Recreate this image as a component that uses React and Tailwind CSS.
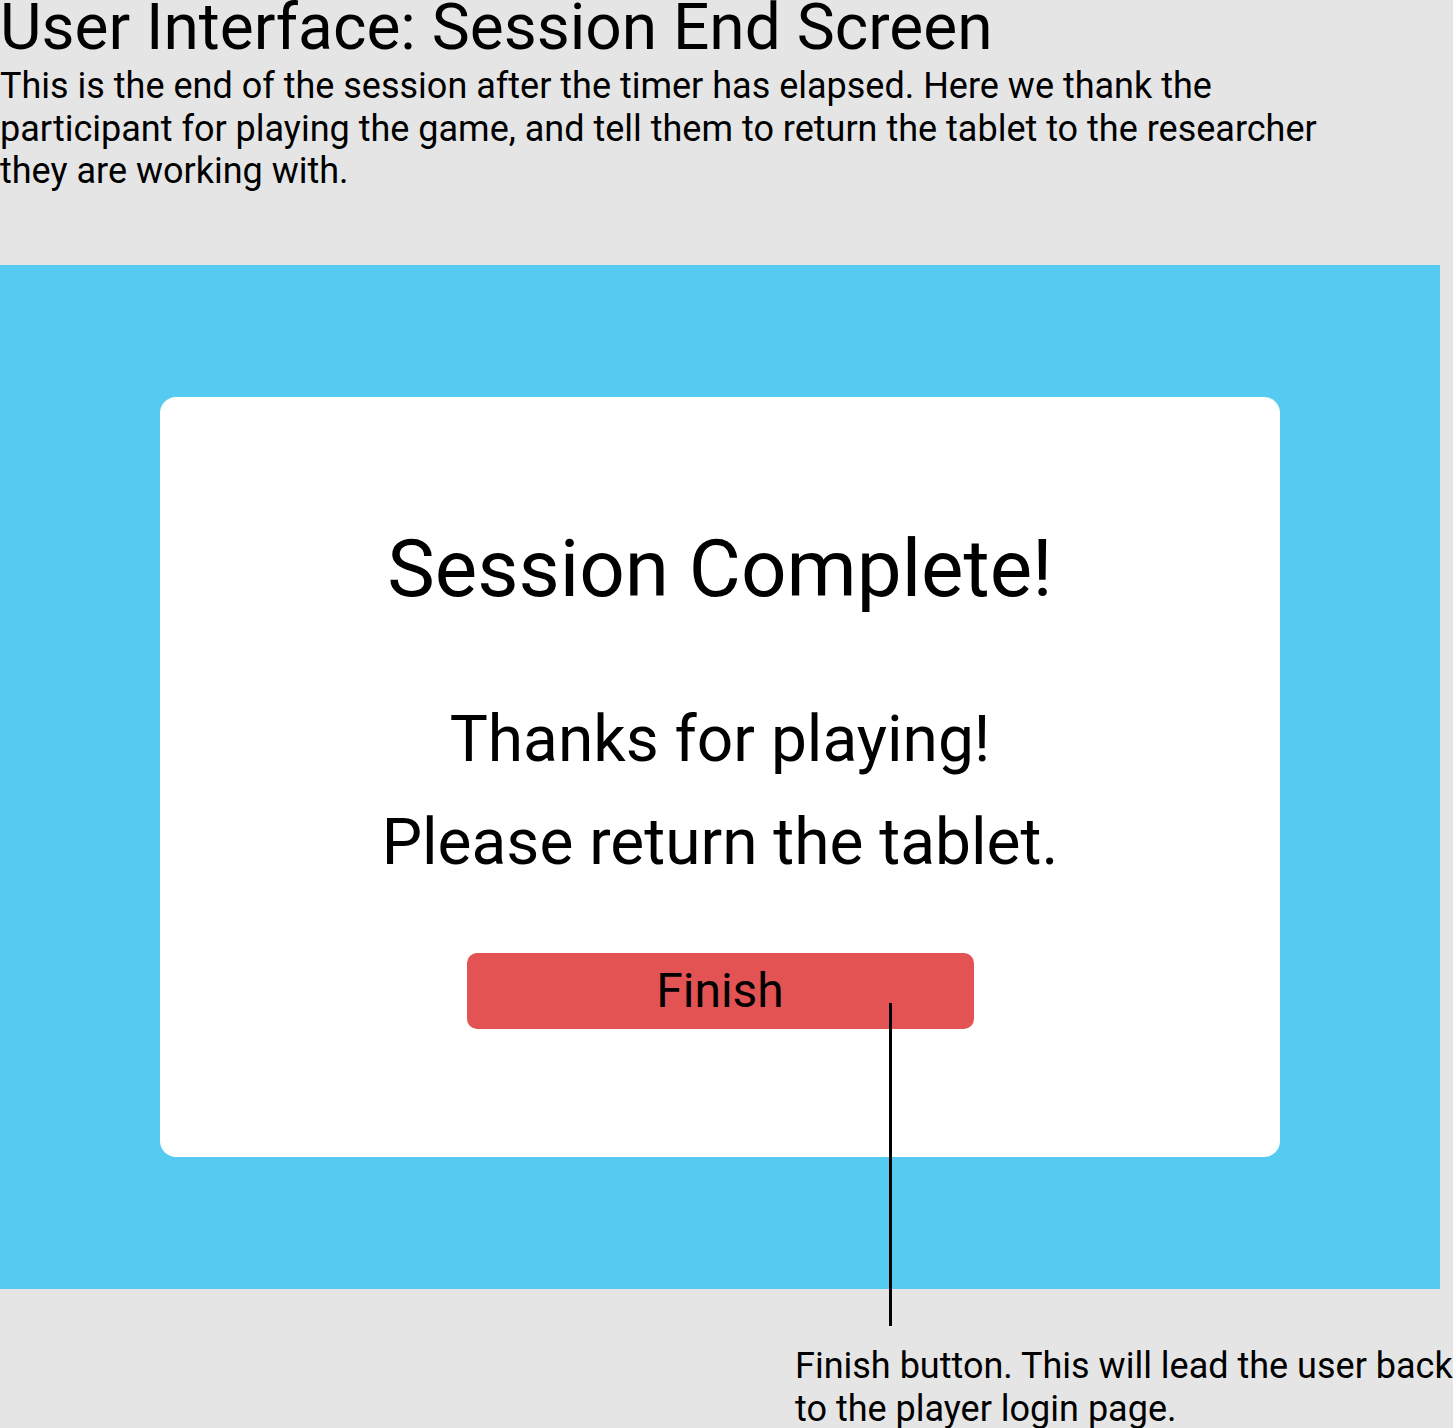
import React from "react";

const SessionEndScreen = () => {
  return (
    <div className="relative w-[1453px] h-[1428px] overflow-hidden bg-[#e5e5e5] text-black font-['Roboto',sans-serif]">
      <h1 className="text-[64px] leading-[56px] font-normal whitespace-nowrap">
        User Interface: Session End Screen
      </h1>
      <p className="mt-[9px] text-[36px] leading-[42.5px] whitespace-nowrap">
        This is the end of the session after the timer has elapsed. Here we thank the
        <br />
        participant for playing the game, and tell them to return the tablet to the researcher
        <br />
        they are working with.
      </p>

      {/* tablet mock */}
      <div className="mt-[72.5px] w-[1440px] h-[1024px] bg-[#56cbf2] pt-[132px] pl-[160px]">
        <div className="w-[1120px] h-[760px] bg-white rounded-[16px] flex flex-col items-center pt-[132px]">
          <h2 className="text-[80px] leading-none font-normal">Session Complete!</h2>
          <p className="mt-[99px] text-[64px] leading-none">Thanks for playing!</p>
          <p className="mt-[39px] text-[64px] leading-none">Please return the tablet.</p>
          <button className="mt-[78px] w-[507px] h-[76px] rounded-[10px] bg-[#e45353] text-[48px] leading-none text-black">
            Finish
          </button>
        </div>
      </div>

      <p className="mt-[56px] ml-[795px] text-[36px] leading-[43px] whitespace-nowrap">
        Finish button. This will lead the user back
        <br />
        to the player login page.
      </p>

      {/* annotation pointer */}
      <div className="absolute left-[889px] top-[1003px] w-[3px] h-[323px] bg-black" />
    </div>
  );
};

export default function App() {
  return <SessionEndScreen />;
}
